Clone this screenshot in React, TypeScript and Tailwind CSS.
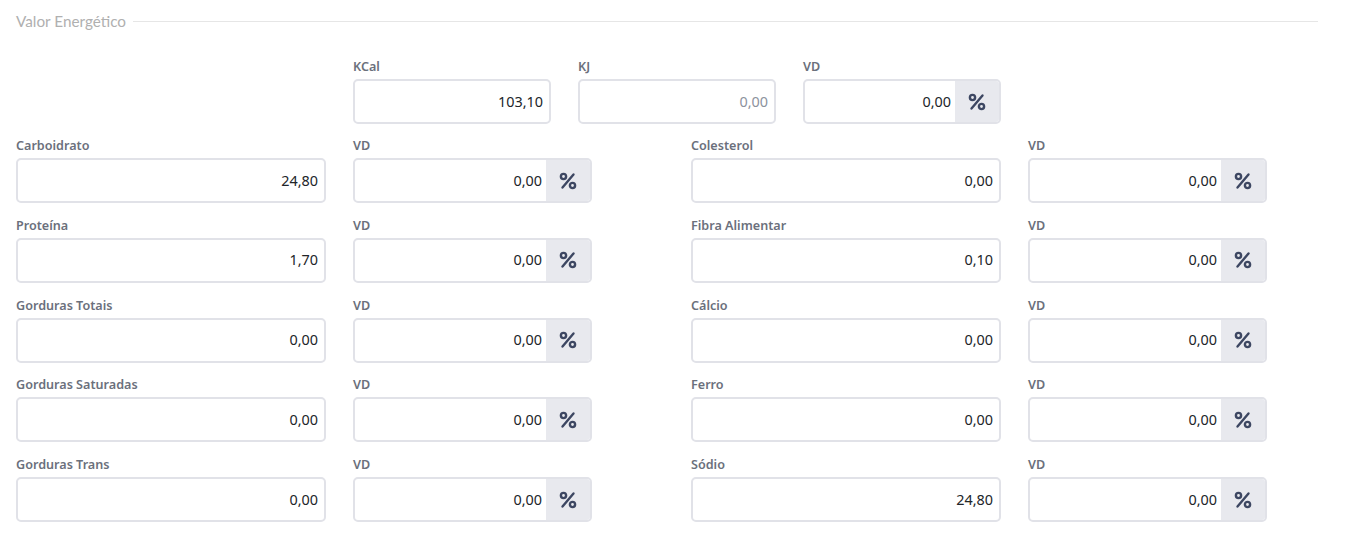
import React from "react";

const PercentIcon = () => (
  <svg width="20" height="20" viewBox="0 0 20 20" fill="none" stroke="#3d4762" strokeWidth="2.4" strokeLinecap="round">
    <circle cx="5.5" cy="5.5" r="2.6" />
    <circle cx="14.5" cy="14.5" r="2.6" />
    <line x1="15.5" y1="3.5" x2="4.5" y2="16.5" />
  </svg>
);

const Label = ({ children }: { children: React.ReactNode }) => (
  <div className="text-[12.6px] leading-[20px] pt-[1px] font-semibold text-[#6b707c] mb-[2px]">{children}</div>
);

const Field = ({ label, value, placeholder }: { label: string; value?: string; placeholder?: boolean }) => (
  <div>
    <Label>{label}</Label>
    <div className="h-[45px] border-2 border-[#e1e2e8] rounded-[5px] bg-white flex items-center justify-end pr-[6px]">
      <span className={"text-[14.4px] " + (placeholder ? "text-[#8c929d]" : "text-[#212529]")}>{value}</span>
    </div>
  </div>
);

const VDField = ({ label = "VD", value = "0,00" }: { label?: string; value?: string }) => (
  <div>
    <Label>{label}</Label>
    <div className="h-[45px] border-2 border-[#e1e2e8] rounded-[5px] bg-white flex overflow-hidden">
      <div className="flex-1 flex items-center justify-end pr-[4px]">
        <span className="text-[14.4px] text-[#212529]">{value}</span>
      </div>
      <div className="w-[44px] bg-[#e8e9ee] flex items-center justify-center">
        <PercentIcon />
      </div>
    </div>
  </div>
);

const rows: [string, string, string, string][] = [
  ["Carboidrato", "24,80", "Colesterol", "0,00"],
  ["Proteína", "1,70", "Fibra Alimentar", "0,10"],
  ["Gorduras Totais", "0,00", "Cálcio", "0,00"],
  ["Gorduras Saturadas", "0,00", "Ferro", "0,00"],
  ["Gorduras Trans", "0,00", "Sódio", "24,80"],
];

export default function App() {
  return (
    <div className="w-[1351px] h-[538px] bg-white px-[16px] pt-[10px]" style={{ fontFamily: '"Noto Sans", sans-serif' }}>
      <div className="flex items-center gap-[7px] pr-[17px] h-[22px]">
        <span className="text-[15.3px] text-[#b0b0b0]" style={{ fontFamily: 'Lato, sans-serif' }}>Valor Energético</span>
        <div className="flex-1 h-px bg-[#e6e6e6]" />
      </div>
      <div className="grid grid-cols-[310px_238px_310px_238px] gap-x-[27px] mt-[24px]">
        <div />
        <div className="col-span-2 grid grid-cols-[198px_198px_198px] gap-x-[27px]">
          <Field label="KCal" value="103,10" />
          <Field label="KJ" value="0,00" placeholder />
          <VDField />
        </div>
        <div />
      </div>
      <div className="flex flex-col gap-[11.75px] mt-[11px]">
        {rows.map((r) => (
          <div key={r[0]} className="flex">
            <div className="w-[310px]"><Field label={r[0]} value={r[1]} /></div>
            <div className="w-[239px] ml-[27px]"><VDField /></div>
            <div className="w-[310px] ml-[99px]"><Field label={r[2]} value={r[3]} /></div>
            <div className="w-[239px] ml-[27px]"><VDField /></div>
          </div>
        ))}
      </div>
    </div>
  );
}
